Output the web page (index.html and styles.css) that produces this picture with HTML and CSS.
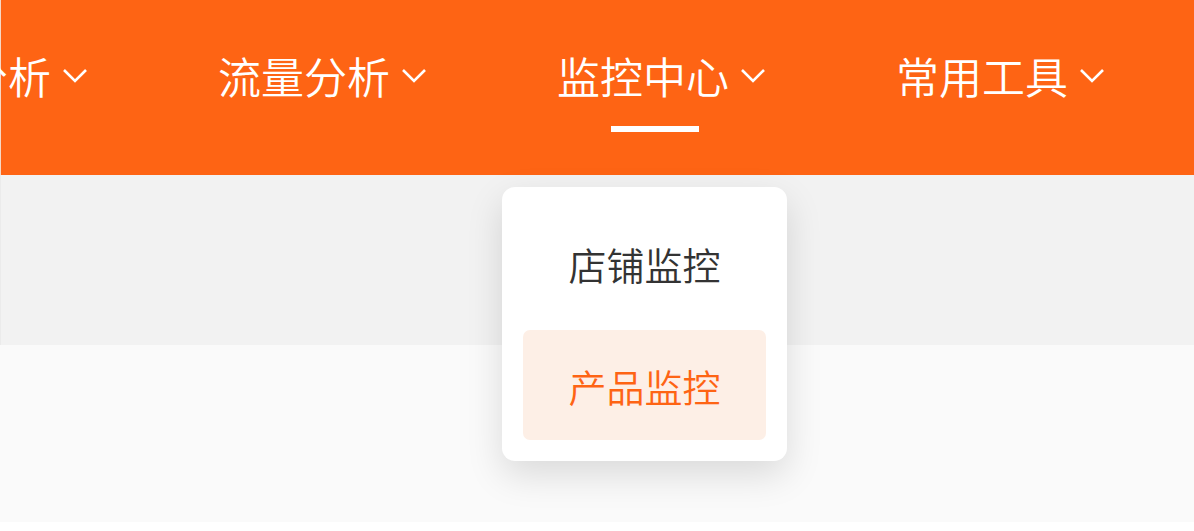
FILE: index.html
```html
<!DOCTYPE html>
<html>
<head>
  <title>监控中心</title>
  <link rel="stylesheet" href="styles.css">
</head>
<body>
  <header class="topbar">
    <nav class="nav">
      <div class="nav-item">
        <div class="nav-label">经营分析<svg class="chevron" viewBox="0 0 26 16"><path d="M2 2 L13 13 L24 2"/></svg></div>
      </div>
      <div class="nav-item">
        <div class="nav-label">流量分析<svg class="chevron" viewBox="0 0 26 16"><path d="M2 2 L13 13 L24 2"/></svg></div>
      </div>
      <div class="nav-item active">
        <div class="nav-label">监控中心<svg class="chevron" viewBox="0 0 26 16"><path d="M2 2 L13 13 L24 2"/></svg></div>
        <div class="underline"></div>
        <!-- open dropdown for the active item -->
        <div class="dropdown">
          <a class="dropdown-item">店铺监控</a>
          <a class="dropdown-item hover">产品监控</a>
        </div>
      </div>
      <div class="nav-item">
        <div class="nav-label">常用工具<svg class="chevron" viewBox="0 0 26 16"><path d="M2 2 L13 13 L24 2"/></svg></div>
      </div>
    </nav>
  </header>
  <section class="band"></section>
  <main class="content"></main>
</body>
</html>
```

FILE: styles.css
```css
body {
  margin: 0;
  background-color: #ffffff;
  font-family: "Noto Sans CJK SC", "Noto Sans", sans-serif;
  overflow: hidden;
}

.topbar {
  height: 175px;
  background-color: #fe6414;
  border-left: 1px solid #f6d7c6;
  box-sizing: border-box;
}

.nav {
  display: flex;
  gap: 130px;
  padding-top: 54px;
  margin-left: -122px;
}

.nav-item {
  position: relative;
  display: flex;
  flex-direction: column;
  color: #ffffff;
}

.nav-label {
  display: flex;
  align-items: center;
  gap: 11px;
  height: 43px;
  font-size: 43px;
  font-weight: 350;
  line-height: 43px;
  white-space: nowrap;
}

.chevron {
  width: 26px;
  height: 16px;
  fill: none;
  stroke: #ffffff;
  stroke-width: 2.6;
}

.underline {
  width: 88px;
  height: 6px;
  margin-top: 29px;
  margin-left: 54px;
  background-color: #ffffff;
}

.dropdown {
  position: absolute;
  top: 133px;
  left: -55px;
  width: 285px;
  box-sizing: border-box;
  padding: 21px;
  display: flex;
  flex-direction: column;
  gap: 12px;
  background-color: #ffffff;
  border-radius: 13px;
  box-shadow: 0 14px 36px rgba(0, 0, 0, 0.13);
  z-index: 2;
}

.dropdown-item {
  height: 110px;
  display: flex;
  justify-content: center;
  align-items: center;
  font-size: 38px;
  font-weight: 350;
  color: #333333;
  border-radius: 7px;
}

.dropdown-item.hover {
  background-color: #fdefe6;
  color: #fe6414;
}

.band {
  height: 170px;
  background-color: #f2f2f2;
  border-left: 1px solid #ebebeb;
}

.content {
  height: 177px;
  background-color: #fafafa;
}
```
